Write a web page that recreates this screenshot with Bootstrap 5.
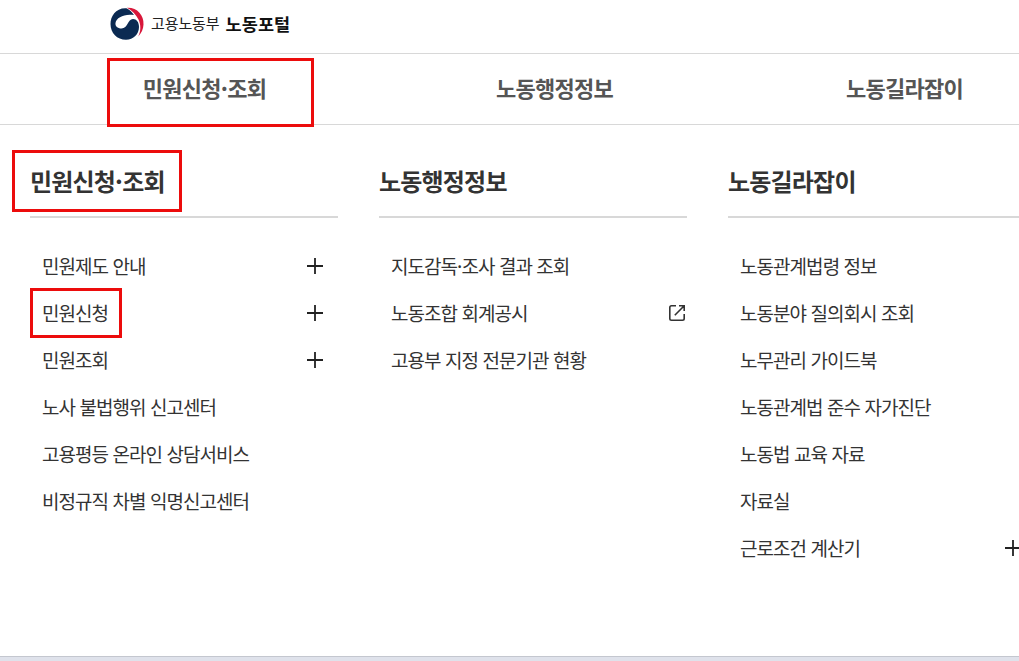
<!DOCTYPE html>
<html lang="ko">
<head>
    <meta charset="UTF-8">
    <meta name="viewport" content="width=device-width, initial-scale=1.0">
    <title>고용노동부 노동포털</title>
    <link href="https://cdn.jsdelivr.net/npm/bootstrap@5.3.3/dist/css/bootstrap.min.css" rel="stylesheet">
    <style>
        body {
            font-family: "Noto Sans CJK KR", sans-serif;
            color: #333;
            height: 100vh;
            overflow: hidden;
        }

        a {
            color: inherit;
            text-decoration: none;
        }

        .site-header {
            height: 54px;
            padding: 0 0 6px 110px;
            border-bottom: 1px solid #d8d8d8;
        }

        .site-logo {
            width: 34px;
            height: 34px;
        }

        .org-name {
            font-size: 15px;
            letter-spacing: -.1px;
            margin-left: 7px;
            color: #222;
        }

        .portal-name {
            font-size: 17.5px;
            letter-spacing: .1px;
            margin-left: 6px;
            padding-top: 1px;
            color: #111;
        }

        .gnb {
            height: 71px;
            padding-left: 30px;
            border-bottom: 1px solid #d8d8d8;
        }

        .gnb-item {
            width: 350px;
            font-size: 22px;
            letter-spacing: -.7px;
            color: #555;
            padding: 0 1px 4px 0;
        }

        .mega-menu {
            padding: 32px 0 0 30px;
            gap: 41px;
        }

        .menu-group {
            width: 308px;
        }

        .menu-title {
            height: 61px;
            font-size: 24px;
            line-height: 48px;
            letter-spacing: -.8px;
            border-bottom: 2px solid #d8d8d8;
        }

        .menu-list {
            padding: 24px 0 0 12px;
            font-size: 19px;
            letter-spacing: -.95px;
        }

        .menu-list li {
            height: 47px;
        }

        .menu-list a {
            padding-top: 2px;
        }

        .icon-plus {
            width: 16px;
            height: 16px;
            margin-right: 15px;
        }

        .icon-out {
            width: 18px;
            height: 18px;
            margin-right: 1px;
        }

        .page-bottom {
            height: 5px;
            background: #dfe2eb;
            border-top: 1px solid #c4c7cf;
        }

        /* red highlight frames */
        .hl::after {
            content: "";
            position: absolute;
            border: 3px solid #ec0c0c;
        }

        .hl-gnb::after {
            inset: 4px 66px -3px 77px;
        }

        .hl-title::after {
            inset: -7px 156px 4px -18px;
        }

        .hl-item::after {
            inset: -9px -14px -10px -12px;
        }
    </style>
</head>
<body class="d-flex flex-column bg-white">
    <header class="site-header d-flex align-items-center flex-shrink-0">
        <svg class="site-logo" viewBox="0 0 34 34">
            <path d="M17 .8C27 .3 34 8 33.500 17.500C33.300 22 31.500 26 28.200 29.500C31 24 31 18 28.500 12.500C26 7.500 22 3.500 17 .8Z" fill="#d8173a"/>
            <path d="M16.500 1.200C6 .5 .5 9 .5 17C.5 26 7 32.800 16 32.800C23.500 32.800 29 27 29 20C29 15 26.500 12 23 12C17.500 12 18 21.500 11.500 21.500C7.500 21.500 5 19 5.500 16C6.500 10.500 14 6.500 24 8C22 5 19.500 2.700 16.500 1.200Z" fill="#0b2a52"/>
        </svg>
        <span class="org-name">고용노동부</span>
        <strong class="portal-name">노동포털</strong>
    </header>

    <nav class="gnb d-flex flex-shrink-0">
        <a href="#" class="gnb-item hl hl-gnb position-relative d-flex align-items-center justify-content-center flex-shrink-0 fw-bold">민원신청·조회</a>
        <a href="#" class="gnb-item d-flex align-items-center justify-content-center flex-shrink-0 fw-bold">노동행정정보</a>
        <a href="#" class="gnb-item d-flex align-items-center justify-content-center flex-shrink-0 fw-bold">노동길라잡이</a>
    </nav>

    <main class="mega-menu d-flex flex-grow-1">
        <section class="menu-group flex-shrink-0">
            <h2 class="menu-title hl hl-title position-relative fw-bold mb-0">민원신청·조회</h2>
            <ul class="menu-list list-unstyled mb-0">
                <li class="d-flex align-items-center justify-content-between">
                    <a href="#">민원제도 안내</a>
                    <svg class="icon-plus" viewBox="0 0 16 16"><path d="M8 0v16M0 8h16" stroke="#222" stroke-width="1.800"/></svg>
                </li>
                <li class="d-flex align-items-center justify-content-between">
                    <a href="#" class="hl hl-item position-relative">민원신청</a>
                    <svg class="icon-plus" viewBox="0 0 16 16"><path d="M8 0v16M0 8h16" stroke="#222" stroke-width="1.800"/></svg>
                </li>
                <li class="d-flex align-items-center justify-content-between">
                    <a href="#">민원조회</a>
                    <svg class="icon-plus" viewBox="0 0 16 16"><path d="M8 0v16M0 8h16" stroke="#222" stroke-width="1.800"/></svg>
                </li>
                <li class="d-flex align-items-center"><a href="#">노사 불법행위 신고센터</a></li>
                <li class="d-flex align-items-center"><a href="#">고용평등 온라인 상담서비스</a></li>
                <li class="d-flex align-items-center"><a href="#">비정규직 차별 익명신고센터</a></li>
            </ul>
        </section>

        <section class="menu-group flex-shrink-0">
            <h2 class="menu-title fw-bold mb-0">노동행정정보</h2>
            <ul class="menu-list list-unstyled mb-0">
                <li class="d-flex align-items-center"><a href="#">지도감독·조사 결과 조회</a></li>
                <li class="d-flex align-items-center justify-content-between">
                    <a href="#">노동조합 회계공시</a>
                    <svg class="icon-out" viewBox="0 0 18 18" fill="none" stroke="#333" stroke-width="1.600">
                        <path d="M8 1.800H3.500Q1.800 1.800 1.800 3.500V14.500Q1.800 16.200 3.500 16.200H14.500Q16.200 16.200 16.200 14.500V10M11 1.800H16.200V7M16.200 1.800L6.800 11.200"/>
                    </svg>
                </li>
                <li class="d-flex align-items-center"><a href="#">고용부 지정 전문기관 현황</a></li>
            </ul>
        </section>

        <section class="menu-group flex-shrink-0">
            <h2 class="menu-title fw-bold mb-0">노동길라잡이</h2>
            <ul class="menu-list list-unstyled mb-0">
                <li class="d-flex align-items-center"><a href="#">노동관계법령 정보</a></li>
                <li class="d-flex align-items-center"><a href="#">노동분야 질의회시 조회</a></li>
                <li class="d-flex align-items-center"><a href="#">노무관리 가이드북</a></li>
                <li class="d-flex align-items-center"><a href="#">노동관계법 준수 자가진단</a></li>
                <li class="d-flex align-items-center"><a href="#">노동법 교육 자료</a></li>
                <li class="d-flex align-items-center"><a href="#">자료실</a></li>
                <li class="d-flex align-items-center justify-content-between">
                    <a href="#">근로조건 계산기</a>
                    <svg class="icon-plus" viewBox="0 0 16 16"><path d="M8 0v16M0 8h16" stroke="#222" stroke-width="1.800"/></svg>
                </li>
            </ul>
        </section>
    </main>

    <div class="page-bottom flex-shrink-0"></div>

    <script src="https://cdn.jsdelivr.net/npm/bootstrap@5.3.3/dist/js/bootstrap.bundle.min.js"></script>
</body>
</html>
